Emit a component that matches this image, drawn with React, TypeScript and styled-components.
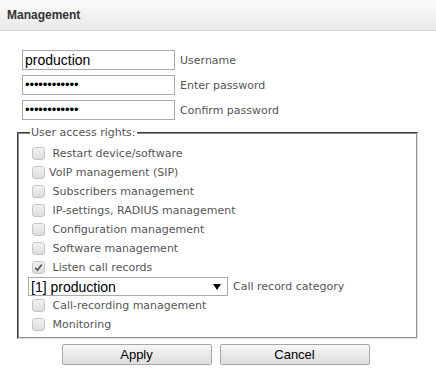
import styled, { createGlobalStyle } from 'styled-components';

const GlobalStyle = createGlobalStyle`
  body {
    margin: 0;
    background: #ffffff;
    font-family: "Liberation Sans", Arial, sans-serif;
  }
`;

const Header = styled.div`
  height: 30px;
  line-height: 30px;
  padding-left: 7px;
  border-bottom: 1px solid #d2d2d2;
  background: linear-gradient(#fafafa, #e9e9e9);
  font-family: "Liberation Sans", Arial, sans-serif;
  font-weight: bold;
  font-size: 12px;
  color: #333;
`;

const Form = styled.div`
  padding: 19px 18px 0 17px;
`;

const Fields = styled.div`
  display: flex;
  flex-direction: column;
  gap: 5px;
  padding-left: 5px;
`;

const FieldRow = styled.div`
  display: flex;
  align-items: center;
  gap: 5px;
  height: 20px;
`;

const TextInput = styled.div`
  box-sizing: border-box;
  width: 153px;
  height: 20px;
  border: 1px solid #a9a9a9;
  padding: 0 2px;
  font-family: "Liberation Sans", Arial, sans-serif;
  font-size: 14px;
  line-height: 18px;
  color: #000;
`;

const Dots = styled.span`
  font-size: 13px;
  letter-spacing: -0.1px;
  line-height: 18px;
  vertical-align: top;
`;

const FieldLabel = styled.span`
  font-family: "DejaVu Sans", Verdana, sans-serif;
  font-size: 11px;
  color: #555;
`;

const Group = styled.fieldset`
  box-sizing: border-box;
  margin: 6px 0 0 0;
  padding: 5px 0 3px 12px;
  width: 401px;
  border: 2px groove #e4e4e4;
  border-top-color: #8d8d8d;
  border-left-color: #8d8d8d;
`;

const Legend = styled.legend`
  padding: 0 2px 0 1px;
  margin-left: -1px;
  font-family: "DejaVu Sans", Verdana, sans-serif;
  font-size: 11px;
  color: #555;
`;

const Rights = styled.div`
  display: flex;
  flex-direction: column;
`;

const CheckRow = styled.label`
  display: flex;
  align-items: center;
  height: 19px;
  font-family: "DejaVu Sans", Verdana, sans-serif;
  font-size: 11px;
  color: #555;
  white-space: pre;
`;

const Box = styled.span`
  box-sizing: border-box;
  width: 13px;
  height: 13px;
  margin: 0 4px 0 1px;
  border: 1px solid #c6c6c6;
  border-radius: 3px;
  background: linear-gradient(#f2f2f2, #dcdcdc);
  display: flex;
  align-items: center;
  justify-content: center;
`;

const SelectRow = styled.div`
  display: flex;
  align-items: center;
  gap: 5px;
  height: 19px;
  margin-left: -3px;
`;

const Select = styled.div`
  box-sizing: border-box;
  width: 200px;
  height: 19px;
  border: 1px solid #a9a9a9;
  padding: 0 6px 0 2px;
  display: flex;
  align-items: center;
  justify-content: space-between;
  font-family: "Liberation Sans", Arial, sans-serif;
  font-size: 14px;
  color: #000;
`;

const Buttons = styled.div`
  display: flex;
  justify-content: center;
  gap: 8px;
  margin-top: 5px;
  padding-right: 4px;
`;

const Button = styled.button`
  width: 150px;
  height: 21px;
  padding: 0;
  border: 1px solid #a7a7a7;
  border-radius: 2px;
  background: linear-gradient(#f6f6f6, #dedede);
  font-family: "Liberation Sans", Arial, sans-serif;
  font-size: 13px;
  color: #000;
`;

const Check = () => (
  <svg width="9" height="9" viewBox="0 0 9 9">
    <path d="M1.2 4.8 L3.4 7.2 L7.8 1.4" fill="none" stroke="#555" strokeWidth="1.6" />
  </svg>
);

const rights: { text: string; checked?: boolean }[] = [
  { text: ' Restart device/software' },
  { text: 'VoIP management (SIP)' },
  { text: ' Subscribers management' },
  { text: ' IP-settings, RADIUS management' },
  { text: ' Configuration management' },
  { text: ' Software management' },
  { text: ' Listen call records', checked: true },
];

const rest = [' Call-recording management', ' Monitoring'];

const Right = ({ text, checked }: { text: string; checked?: boolean }) => (
  <CheckRow>
    <Box>{checked && <Check />}</Box>
    {text}
  </CheckRow>
);

export default function App() {
  return (
    <>
      <GlobalStyle />
      <Header>Management</Header>
      <Form>
        <Fields>
          <FieldRow>
            <TextInput>production</TextInput>
            <FieldLabel>Username</FieldLabel>
          </FieldRow>
          <FieldRow>
            <TextInput>
              <Dots>••••••••••••</Dots>
            </TextInput>
            <FieldLabel>Enter password</FieldLabel>
          </FieldRow>
          <FieldRow>
            <TextInput>
              <Dots>••••••••••••</Dots>
            </TextInput>
            <FieldLabel>Confirm password</FieldLabel>
          </FieldRow>
        </Fields>
        <Group>
          <Legend>User access rights:</Legend>
          <Rights>
            {rights.map((r) => (
              <Right key={r.text} text={r.text} checked={r.checked} />
            ))}
            <SelectRow>
              <Select>
                <span>[1] production</span>
                <svg width="8" height="6" viewBox="0 0 8 6">
                  <path d="M0 0 H8 L4 6 Z" fill="#000" />
                </svg>
              </Select>
              <FieldLabel>Call record category</FieldLabel>
            </SelectRow>
            {rest.map((t) => (
              <Right key={t} text={t} />
            ))}
          </Rights>
        </Group>
        <Buttons>
          <Button>Apply</Button>
          <Button>Cancel</Button>
        </Buttons>
      </Form>
    </>
  );
}
